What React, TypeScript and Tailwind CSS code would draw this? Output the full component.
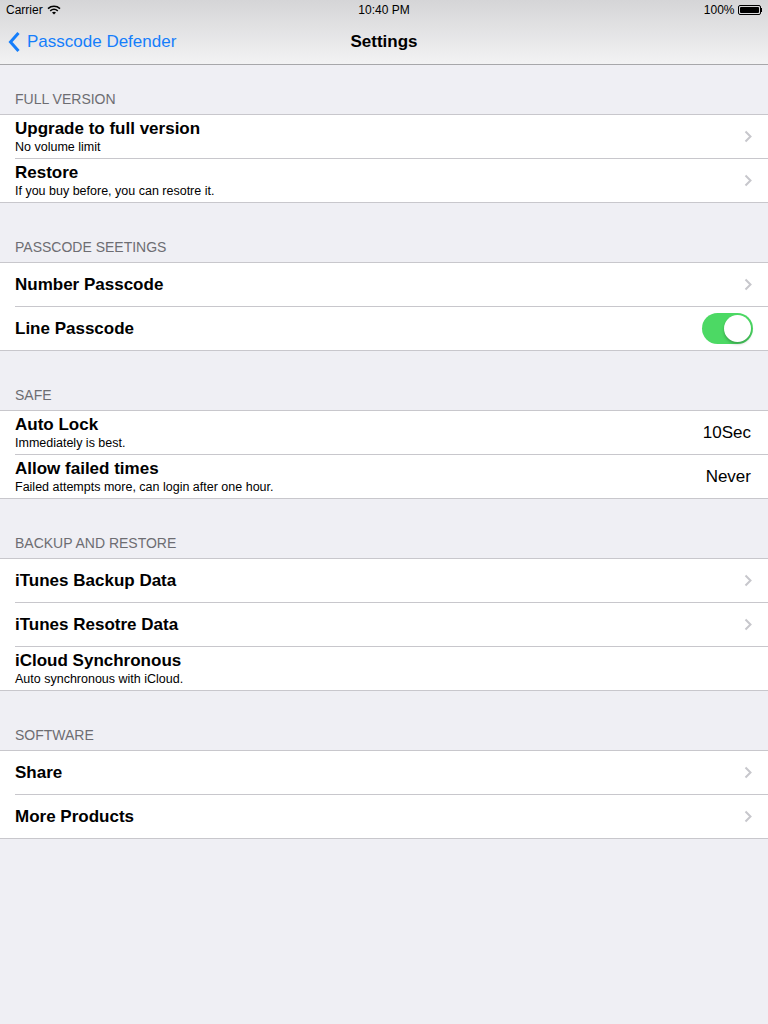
import React from "react";

type Row = {
  title: string;
  subtitle?: string;
  value?: string;
  chevron?: boolean;
  toggle?: boolean;
};

type Section = { header: string; rows: Row[] };

const sections: Section[] = [
  {
    header: "FULL VERSION",
    rows: [
      { title: "Upgrade to full version", subtitle: "No volume limit", chevron: true },
      { title: "Restore", subtitle: "If you buy before, you can resotre it.", chevron: true },
    ],
  },
  {
    header: "PASSCODE SEETINGS",
    rows: [
      { title: "Number Passcode", chevron: true },
      { title: "Line Passcode", toggle: true },
    ],
  },
  {
    header: "SAFE",
    rows: [
      { title: "Auto Lock", subtitle: "Immediately is best.", value: "10Sec" },
      { title: "Allow failed times", subtitle: "Failed attempts more, can login after one hour.", value: "Never" },
    ],
  },
  {
    header: "BACKUP AND RESTORE",
    rows: [
      { title: "iTunes Backup Data", chevron: true },
      { title: "iTunes Resotre Data", chevron: true },
      { title: "iCloud Synchronous", subtitle: "Auto synchronous with iCloud." },
    ],
  },
  {
    header: "SOFTWARE",
    rows: [
      { title: "Share", chevron: true },
      { title: "More Products", chevron: true },
    ],
  },
];

function Chevron() {
  return (
    <svg width="8" height="13" viewBox="0 0 8 13" className="shrink-0">
      <path d="M1.5 1.5 L6.5 6.5 L1.5 11.5" fill="none" stroke="#c7c7cc" strokeWidth="2" />
    </svg>
  );
}

function Toggle() {
  return (
    <div className="relative w-[51px] h-[31px] rounded-full bg-[#4cd964]">
      <div className="absolute right-[2px] top-[2px] w-[27px] h-[27px] rounded-full bg-white shadow-[0_2px_3px_rgba(0,0,0,0.25)]" />
    </div>
  );
}

function StatusBar() {
  return (
    <div className="h-5 flex items-center justify-between px-[6px] text-[12px] text-black">
      <div className="flex items-center gap-[4px] w-[200px]">
        <span>Carrier</span>
        <svg width="14" height="10" viewBox="0 0 14 10">
          <path d="M1 3.6 A9 9 0 0 1 13 3.6" fill="none" stroke="#000" strokeWidth="1.5" />
          <path d="M3.2 5.8 A6 6 0 0 1 10.8 5.8" fill="none" stroke="#000" strokeWidth="1.5" />
          <path d="M7 9.5 L5 7.6 A3 3 0 0 1 9 7.6 Z" fill="#000" />
        </svg>
      </div>
      <span>10:40 PM</span>
      <div className="flex items-center justify-end gap-[3px] w-[200px]">
        <span>100%</span>
        <div className="flex items-center">
          <div className="w-[23px] h-[10px] border border-black rounded-[2px] p-[1px]">
            <div className="w-full h-full bg-black rounded-[1px]" />
          </div>
          <div className="w-[1.5px] h-[4px] bg-black" />
        </div>
      </div>
    </div>
  );
}

function NavBar() {
  return (
    <div className="relative h-[45px] flex items-center border-b border-[#a7a7aa]">
      <div className="flex items-center gap-[6px] pl-[8px] text-[#157efb] text-[17px]">
        <svg width="13" height="22" viewBox="0 0 13 22">
          <path d="M10.5 2 L2.5 11 L10.5 20" fill="none" stroke="#157efb" strokeWidth="3" />
        </svg>
        <span>Passcode Defender</span>
      </div>
      <div className="absolute inset-0 flex items-center justify-center pointer-events-none">
        <span className="text-[17px] font-semibold text-black">Settings</span>
      </div>
    </div>
  );
}

function SettingsRow({ row, last }: { row: Row; last: boolean }) {
  return (
    <div className={`h-[44px] pl-[15px] bg-white ${last ? "border-b border-[#c8c7cc]" : ""}`}>
      <div
        className={`h-full flex items-center pr-[15px] ${last ? "" : "border-b border-[#c8c7cc]"}`}
      >
        <div className="flex-1 flex flex-col justify-center">
          <div className="text-[17px] leading-[20px] font-semibold text-black">{row.title}</div>
          {row.subtitle && (
            <div className="text-[12.5px] leading-[14px] text-black mt-[1px]">{row.subtitle}</div>
          )}
        </div>
        {row.value && <span className="text-[17px] text-black pr-[2px]">{row.value}</span>}
        {row.chevron && (
          <div className="pr-[1px]">
            <Chevron />
          </div>
        )}
        {row.toggle && <Toggle />}
      </div>
    </div>
  );
}

export default function App() {
  return (
    <div
      className="w-[768px] h-[1024px] bg-[#efeff4] overflow-hidden"
      style={{ fontFamily: "'Liberation Sans', Arial, sans-serif" }}
    >
      <div className="bg-gradient-to-b from-[#d5d5d7] to-[#f3f3f4]">
        <StatusBar />
        <NavBar />
      </div>
      {sections.map((section, i) => (
        <div key={section.header}>
          <div
            className={`${i === 0 ? "h-[49px]" : "h-[59px]"} flex items-end px-[15px] pb-[7px] text-[14px] leading-[15px] text-[#6d6d72]`}
          >
            {section.header}
          </div>
          <div className="border-t border-[#c8c7cc]">
            {section.rows.map((row, j) => (
              <SettingsRow key={row.title} row={row} last={j === section.rows.length - 1} />
            ))}
          </div>
        </div>
      ))}
    </div>
  );
}
